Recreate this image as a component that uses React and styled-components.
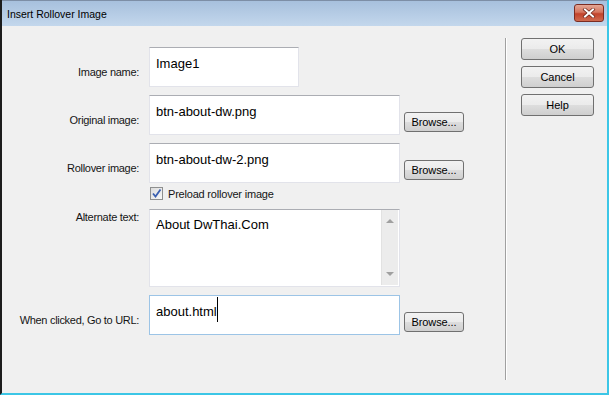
import React from "react";
import styled, { createGlobalStyle } from "styled-components";

const GlobalStyle = createGlobalStyle`
  html, body {
    margin: 0;
    padding: 0;
    background: #f0f0f0;
  }
  body {
    font-family: "Liberation Sans", Arial, sans-serif;
  }
`;

export default function App() {
  return (
    <>
      <GlobalStyle />
      <Window>
        <TitleBar>
          <Title>Insert Rollover Image</Title>
          <CloseButton>
            <svg width="14" height="10" viewBox="0 0 14 10">
              <path d="M3 1.5 L11 8.5 M11 1.5 L3 8.5" stroke="#6b2418" strokeWidth="3.4" strokeLinecap="square" />
              <path d="M3 1.5 L11 8.5 M11 1.5 L3 8.5" stroke="#ffffff" strokeWidth="2" strokeLinecap="square" />
            </svg>
          </CloseButton>
        </TitleBar>
        <Body>
          <Form>
            <Row>
              <Label>Image name:</Label>
              <Field $width={150}>Image1</Field>
            </Row>
            <Row>
              <Label>Original image:</Label>
              <Field $width={251}>btn-about-dw.png</Field>
              <Browse>Browse...</Browse>
            </Row>
            <Row>
              <Label>Rollover image:</Label>
              <Field $width={251}>btn-about-dw-2.png</Field>
              <Browse>Browse...</Browse>
            </Row>
            <CheckRow>
              <Check>
                <svg width="11" height="11" viewBox="0 0 11 11">
                  <path d="M2 5.5 L4.5 8.5 L9.5 1.5" stroke="#3a5fb0" strokeWidth="1.8" fill="none" />
                </svg>
              </Check>
              <CheckText>Preload rollover image</CheckText>
            </CheckRow>
            <Row $top>
              <Label $top>Alternate text:</Label>
              <TextArea>
                <AreaText>About DwThai.Com</AreaText>
                <ScrollBar>
                  <Arrow $up />
                  <Arrow />
                </ScrollBar>
              </TextArea>
            </Row>
            <Row>
              <Label>When clicked, Go to URL:</Label>
              <Field $width={251} $focus>
                about.html<Caret />
              </Field>
              <Browse>Browse...</Browse>
            </Row>
          </Form>
          <Separator />
          <Actions>
            <DialogButton>OK</DialogButton>
            <DialogButton>Cancel</DialogButton>
            <DialogButton>Help</DialogButton>
          </Actions>
        </Body>
      </Window>
    </>
  );
}

const Window = styled.div`
  width: 609px;
  height: 395px;
  box-sizing: border-box;
  border-left: 2px solid #1c1c1c;
  border-right: 2px solid #3cc6e6;
  border-bottom: 2px solid #3cc6e6;
  display: flex;
  flex-direction: column;
  background: #f0f0f0;
`;

const TitleBar = styled.div`
  height: 26px;
  box-sizing: border-box;
  border-top: 1px solid #7d8ea6;
  background: linear-gradient(#a7c0dd, #c3d7ec);
  display: flex;
  align-items: center;
  justify-content: space-between;
  padding: 0 3px 0 5px;
`;

const Title = styled.span`
  font-size: 10.5px;
  color: #000;
  margin-top: 1px;
`;

const CloseButton = styled.div`
  width: 30px;
  height: 18px;
  box-sizing: border-box;
  border: 1px solid #7b2c22;
  border-radius: 3px;
  background: linear-gradient(#e4a796 0%, #d5765f 45%, #c2432b 55%, #cf6a4f 100%);
  display: flex;
  align-items: center;
  justify-content: center;
  margin-top: -2px;
`;

const Body = styled.div`
  flex: 1;
  display: flex;
`;

const Form = styled.div`
  width: 503px;
  padding-top: 21px;
  display: flex;
  flex-direction: column;
  gap: 8px;
`;

const Row = styled.div`
  display: flex;
  align-items: ${(p) => (p.$top ? "flex-start" : "flex-end")};
`;

const Label = styled.div`
  width: 137px;
  flex: none;
  margin-right: 10px;
  text-align: right;
  font-size: 11px;
  letter-spacing: -0.3px;
  line-height: 15px;
  color: #151515;
  padding-bottom: ${(p) => (p.$top ? "0" : "7px")};
  padding-top: ${(p) => (p.$top ? "1px" : "0")};
`;

const Field = styled.div`
  width: ${(p) => p.$width}px;
  height: 40px;
  box-sizing: border-box;
  background: #fff;
  border: 1px solid ${(p) => (p.$focus ? "#9cc4e6" : "#e2e3ea")};
  border-top-color: ${(p) => (p.$focus ? "#9cc4e6" : "#abadb3")};
  padding: 8px 6px 0;
  font-size: 13px;
  line-height: 16px;
  color: #000;
  white-space: nowrap;
`;

const Caret = styled.span`
  display: inline-block;
  width: 1px;
  height: 25px;
  background: #000;
  vertical-align: top;
  margin-top: -7px;
`;

const Browse = styled.div`
  width: 60px;
  height: 20px;
  box-sizing: border-box;
  margin-left: 4px;
  margin-bottom: 3px;
  border: 1px solid #707070;
  border-radius: 3px;
  background: linear-gradient(#f2f2f2 0%, #ebebeb 50%, #dddddd 51%, #cfcfcf 100%);
  font-size: 11px;
  letter-spacing: -0.1px;
  line-height: 18px;
  text-align: center;
  color: #000;
`;

const CheckRow = styled.div`
  display: flex;
  align-items: center;
  margin: -4px 0 1px 148px;
  height: 13px;
`;

const Check = styled.div`
  width: 13px;
  height: 13px;
  box-sizing: border-box;
  border: 1px solid #8e8f8f;
  background: linear-gradient(135deg, #dcdcdc, #f8f8f8);
  display: flex;
  align-items: center;
  justify-content: center;
`;

const CheckText = styled.span`
  margin-left: 5px;
  font-size: 11px;
  letter-spacing: -0.2px;
  line-height: 15px;
  color: #151515;
  margin-top: 2px;
`;

const TextArea = styled.div`
  width: 251px;
  height: 78px;
  box-sizing: border-box;
  background: #fff;
  border: 1px solid #e2e3ea;
  border-top-color: #abadb3;
  display: flex;
`;

const AreaText = styled.div`
  flex: 1;
  padding: 7px 6px 0;
  font-size: 13px;
  line-height: 16px;
  color: #000;
`;

const ScrollBar = styled.div`
  width: 16px;
  margin: 0 1px 1px 0;
  background: #ececec;
  border-left: 1px solid #e2e2e2;
  display: flex;
  flex-direction: column;
  justify-content: space-between;
  align-items: center;
  padding: 9px 0 9px;
`;

const Arrow = styled.div`
  width: 0;
  height: 0;
  border-left: 4px solid transparent;
  border-right: 4px solid transparent;
  ${(p) =>
    p.$up
      ? "border-bottom: 4px solid #a0a0a0;"
      : "border-top: 4px solid #a0a0a0;"}
`;

const Separator = styled.div`
  width: 1px;
  height: 342px;
  margin-top: 12px;
  background: #a0a0a0;
  border-right: 1px solid #ffffff;
`;

const Actions = styled.div`
  display: flex;
  flex-direction: column;
  gap: 6px;
  padding-top: 12px;
  margin-left: 14px;
`;

const DialogButton = styled.div`
  width: 73px;
  height: 22px;
  box-sizing: border-box;
  border: 1px solid #707070;
  border-radius: 3px;
  background: linear-gradient(#f2f2f2 0%, #ebebeb 50%, #dddddd 51%, #cfcfcf 100%);
  font-size: 11px;
  line-height: 20px;
  text-align: center;
  color: #000;
`;
